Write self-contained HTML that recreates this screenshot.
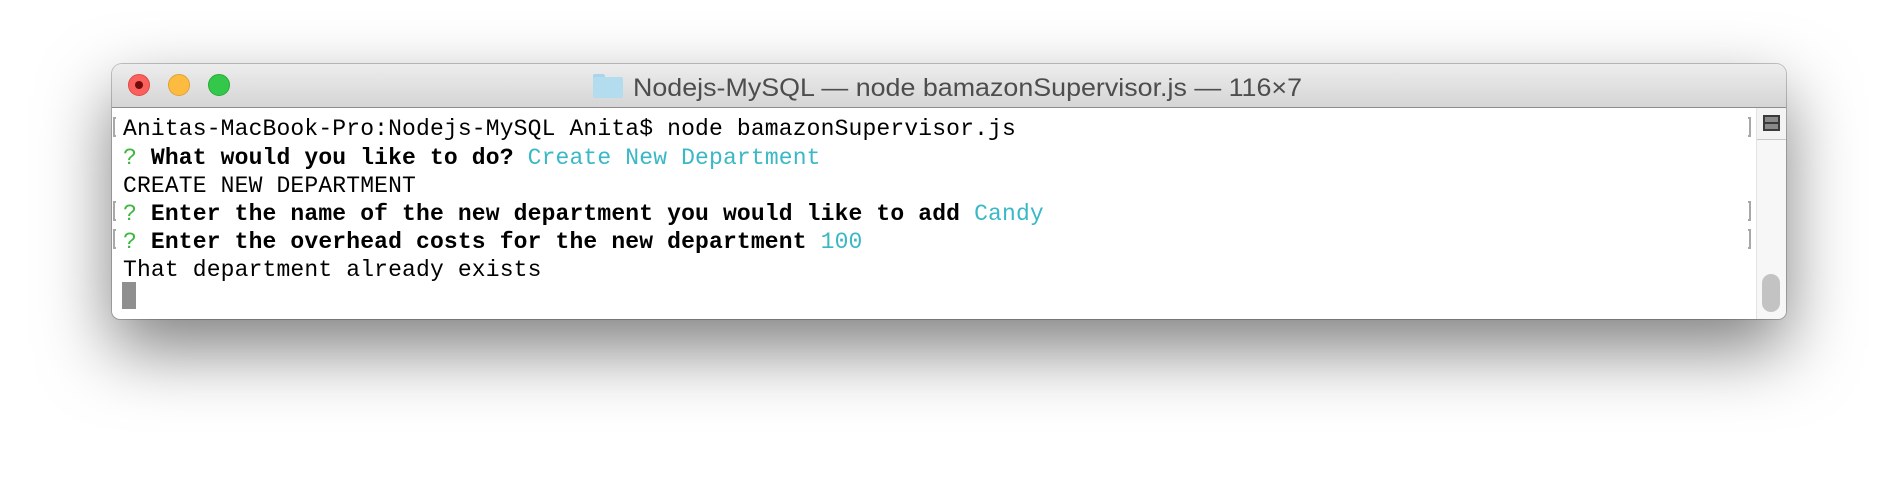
<!DOCTYPE html>
<html><head><meta charset="utf-8"><style>
html,body{margin:0;padding:0;width:1898px;height:480px;background:#fff;overflow:hidden}
.win{position:absolute;left:112px;top:64px;width:1674px;height:255px;border-radius:10px 10px 8px 8px;background:#fff;box-shadow:0 0 0 1px rgba(0,0,0,.22),0 30px 70px rgba(0,0,0,.5);overflow:hidden}
.tb{position:absolute;left:0;top:0;width:100%;height:43px;background:linear-gradient(#ededed,#d5d5d5);border-bottom:1px solid #8e8e8e}
.dot{position:absolute;top:10px;width:22px;height:22px;border-radius:50%;box-sizing:border-box}
.sb{position:absolute;right:0;top:44px;width:29px;bottom:0;background:#f7f7f7;border-left:1px solid #e3e3e3}
.row{position:absolute;left:11px;height:28px;line-height:28px;font-family:"Liberation Mono",monospace;font-size:23px;letter-spacing:0.15px;white-space:pre;color:#000}
b{font-weight:bold}
.g{color:#3cb83c}.c{color:#3ab8c6}
.br{position:absolute;width:3px;height:20px;border:2px solid #a8a8a8;box-sizing:border-box}
.bl{border-right:none}.brr{border-left:none}
</style></head><body>
<div class="win">
 <div class="tb">
  <div class="dot" style="left:16px;background:#fc605c;border:1px solid #de4a44"><div style="position:absolute;left:6px;top:6px;width:8px;height:8px;border-radius:50%;background:#6e0d0a"></div></div>
  <div class="dot" style="left:56px;background:#fdbc40;border:1px solid #dea236"></div>
  <div class="dot" style="left:96px;background:#34c84a;border:1px solid #27aa35"></div>
  <div style="position:absolute;left:481px;top:10px;width:30px;height:24px">
   <div style="position:absolute;left:0;top:0;width:12px;height:5px;background:#a9d4ea;border-radius:2px 2px 0 0"></div>
   <div style="position:absolute;left:0;top:3px;width:30px;height:21px;background:#b4dcef;border-radius:2px"></div>
  </div>
  <svg style="position:absolute;left:0;top:0" width="1674" height="43"><text x="521" y="32" font-family="Liberation Sans,sans-serif" font-size="25" fill="#4d4d4d" textLength="669" lengthAdjust="spacingAndGlyphs">Nodejs-MySQL — node bamazonSupervisor.js — 116×7</text></svg>
 </div>
 <div class="sb">
  <div style="position:absolute;left:0;top:0;width:29px;height:31px;border-bottom:1px solid #c8c8c8;background:#f3f3f3"></div>
  <div style="position:absolute;left:6px;top:7px;width:17px;height:16px;background:#3a3a3a"><div style="position:absolute;left:2px;top:2px;width:13px;height:5px;background:#8a8a8a"></div><div style="position:absolute;left:2px;top:9px;width:13px;height:5px;background:#8a8a8a"></div></div>
  <div style="position:absolute;left:5px;top:166px;width:18px;height:38px;border-radius:9px;background:#c3c3c3"></div>
 </div>
 <div class="br bl" style="left:1px;top:53px"></div>
 <div class="br bl" style="left:1px;top:137px"></div>
 <div class="br bl" style="left:1px;top:165px"></div>
 <div class="br brr" style="left:1636px;top:53px"></div>
 <div class="br brr" style="left:1636px;top:137px"></div>
 <div class="br brr" style="left:1636px;top:165px"></div>
 <div class="row" style="top:51px">Anitas-MacBook-Pro:Nodejs-MySQL Anita$ node bamazonSupervisor.js</div>
 <div class="row" style="top:80px"><span class="g">?</span> <b>What would you like to do?</b> <span class="c">Create New Department</span></div>
 <div class="row" style="top:108px">CREATE NEW DEPARTMENT</div>
 <div class="row" style="top:136px"><span class="g">?</span> <b>Enter the name of the new department you would like to add</b> <span class="c">Candy</span></div>
 <div class="row" style="top:164px"><span class="g">?</span> <b>Enter the overhead costs for the new department</b> <span class="c">100</span></div>
 <div class="row" style="top:192px">That department already exists</div>
 <div style="position:absolute;left:10px;top:218px;width:14px;height:27px;background:#8f8f8f"></div>
</div>
</body></html>
